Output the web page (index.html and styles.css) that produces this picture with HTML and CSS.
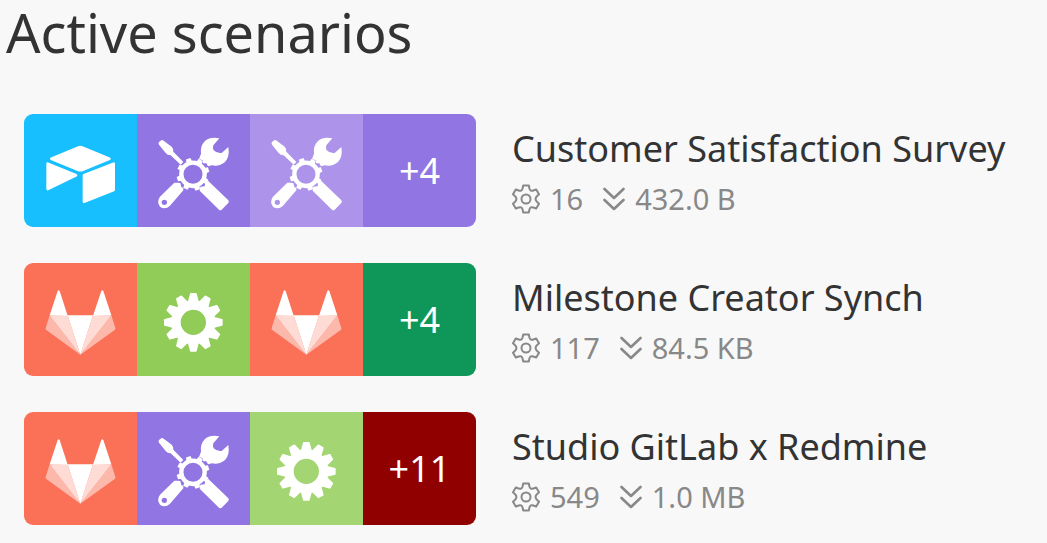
FILE: index.html
```html
<!DOCTYPE html>
<html lang="en">
<head>
<meta charset="utf-8">
<title>Active scenarios</title>
<link rel="stylesheet" href="styles.css">
</head>
<body>
<svg class="sprite" aria-hidden="true">
  <symbol id="airtable" viewBox="0 0 339 339">
    <g fill="#fff" stroke="#fff" stroke-width="8" stroke-linejoin="round">
      <path d="M82 134 L162 101 Q169 98 176 101 L256 134 L176 167 Q169 170 162 167 Z"/>
      <path d="M71 149 L156 184 L71 225 Z"/>
      <path d="M180 184 L269 149 V228 L180 263 Z"/>
    </g>
  </symbol>
  <symbol id="gitlab" viewBox="0 0 339 339">
    <path fill="#fff" d="M101 84 Q104 79 107 84 L131 158 L77 157 Z M232 84 Q235 79 238 84 L262 157 L207 158 Z M131 157 H207 L169 275 Z"/>
    <path fill="#fff" fill-opacity=".75" d="M77 157 H131 L169 275 Z M262 157 H207 L169 275 Z"/>
    <path fill="#fff" fill-opacity=".5" d="M77 157 L65 195 Q64 199 67 201 L169 275 Z M262 157 L274 195 Q275 199 272 201 L169 275 Z"/>
  </symbol>
  <symbol id="cog" viewBox="0 0 339 339">
    <circle cx="169" cy="178" r="52" fill="none" stroke="#fff" stroke-width="28"/>
    <g fill="#fff">
      <g id="cog-quarter">
        <path id="cog-tooth" d="M152 118 L159 92 Q159 90 161 90 H177 Q179 90 179 92 L186 118 Z"/>
        <use href="#cog-tooth" transform="rotate(30 169 178)"/>
        <use href="#cog-tooth" transform="rotate(60 169 178)"/>
      </g>
      <use href="#cog-quarter" transform="rotate(90 169 178)"/>
      <use href="#cog-quarter" transform="rotate(180 169 178)"/>
      <use href="#cog-quarter" transform="rotate(270 169 178)"/>
    </g>
  </symbol>
  <symbol id="tools" viewBox="0 0 339 339">
    <g fill="#fff">
      <path d="M66 84 L74 78 Q77 77 80 80 L104 98 Q109 103 109 113 L139 144 L131 152 L101 124 Q91 124 86 117 L66 92 Q63 87 66 84 Z"/>
      <path d="M247 73 Q220 67 204 81 Q189 96 192 119 L186 135 L197 139 L198 148 L208 148 L213 157 L225 154 Q248 158 264 144 Q279 128 274 99 L254 117 Q240 119 230 109 Q226 102 229 94 Z"/>
      <path fill-rule="evenodd" d="M120 206 L130 207 L133 219 L139 222 L139 229 L99 275 Q84 289 69 278 Q58 263 69 248 L112 206 Z M82 257 A8 8 0 1 0 82 273 A8 8 0 1 0 82 257 Z"/>
      <path d="M190 218 L203 217 L205 205 L214 201 L274 259 Q277 263 274 267 L254 287 Q250 290 246 287 L188 230 Z"/>
      <g id="ring-half">
        <path id="ring-tooth" d="M159 145 L161 132 H175 L177 145 Z" transform="rotate(28 168 181)"/>
        <use href="#ring-tooth" transform="rotate(45 168 181)"/>
        <use href="#ring-tooth" transform="rotate(90 168 181)"/>
        <use href="#ring-tooth" transform="rotate(135 168 181)"/>
      </g>
      <use href="#ring-half" transform="rotate(180 168 181)"/>
    </g>
    <circle cx="168" cy="181" r="35" fill="none" stroke="#fff" stroke-width="13"/>
  </symbol>
  <symbol id="gear" viewBox="0 0 28 30">
    <g fill="none" stroke="currentColor" stroke-width="2" stroke-linejoin="round">
      <path d="M11.2 1.5 H16.8 L17.5 4.7 Q18.4 7.5 21.3 6.5 L24.2 5.5 L27 10.3 L24.7 12.4 Q22.5 15 24.7 17.6 L27 19.7 L24.2 24.5 L21.3 23.5 Q18.4 22.5 17.5 25.3 L16.8 28.5 H11.2 L10.5 25.3 Q9.6 22.5 6.7 23.5 L3.8 24.5 L1 19.7 L3.3 17.6 Q5.5 15 3.3 12.4 L1 10.3 L3.8 5.5 L6.7 6.5 Q9.6 7.5 10.5 4.7 Z"/>
      <circle cx="14" cy="15" r="4.5"/>
    </g>
  </symbol>
  <symbol id="transfer" viewBox="0 0 22 24">
    <path fill="none" stroke="currentColor" stroke-width="2.6" stroke-linecap="round" stroke-linejoin="round" d="M1.500 2 L11 11 L20.500 2 M1.500 13 L11 22 L20.500 13"/>
  </symbol>
</svg>
<main class="page">
  <h1 class="title">Active scenarios</h1>
  <ul class="list">
    <li class="row">
      <div class="tiles">
        <span class="tile blue"><svg class="app"><use href="#airtable"/></svg></span>
        <span class="tile purple"><svg class="app"><use href="#tools"/></svg></span>
        <span class="tile lilac"><svg class="app"><use href="#tools"/></svg></span>
        <span class="tile purple">+4</span>
      </div>
      <div class="info">
        <h2 class="name">Customer Satisfaction Survey</h2>
        <div class="meta">
          <span class="stat"><svg class="gear"><use href="#gear"/></svg>16</span>
          <span class="stat"><svg class="transfer"><use href="#transfer"/></svg>432.0 B</span>
        </div>
      </div>
    </li>
    <li class="row">
      <div class="tiles">
        <span class="tile coral"><svg class="app"><use href="#gitlab"/></svg></span>
        <span class="tile green"><svg class="app"><use href="#cog"/></svg></span>
        <span class="tile coral"><svg class="app"><use href="#gitlab"/></svg></span>
        <span class="tile emerald">+4</span>
      </div>
      <div class="info">
        <h2 class="name">Milestone Creator Synch</h2>
        <div class="meta">
          <span class="stat"><svg class="gear"><use href="#gear"/></svg>117</span>
          <span class="stat"><svg class="transfer"><use href="#transfer"/></svg>84.5 KB</span>
        </div>
      </div>
    </li>
    <li class="row">
      <div class="tiles">
        <span class="tile coral"><svg class="app"><use href="#gitlab"/></svg></span>
        <span class="tile purple"><svg class="app"><use href="#tools"/></svg></span>
        <span class="tile lime"><svg class="app"><use href="#cog"/></svg></span>
        <span class="tile red">+11</span>
      </div>
      <div class="info">
        <h2 class="name">Studio GitLab x Redmine</h2>
        <div class="meta">
          <span class="stat"><svg class="gear"><use href="#gear"/></svg>549</span>
          <span class="stat"><svg class="transfer"><use href="#transfer"/></svg>1.0 MB</span>
        </div>
      </div>
    </li>
  </ul>
</main>
</body>
</html>
```
FILE: styles.css
```css
body {
  margin: 0;
  background: #f8f8f8;
  color: #333;
  font-family: "Noto Sans", "Open Sans", sans-serif;
}
.sprite {
  position: absolute;
  width: 0;
  height: 0;
}
.title {
  margin: 0;
  padding-left: 6px;
  font-size: 54px;
  font-weight: 400;
  line-height: 64px;
}
.list {
  display: flex;
  flex-direction: column;
  gap: 36px;
  margin: 0;
  padding: 50px 24px 16px;
  list-style: none;
}
.row {
  display: flex;
  gap: 36px;
}
.tiles {
  display: flex;
  flex: none;
  border-radius: 9px;
  overflow: hidden;
}
.tile {
  display: flex;
  align-items: center;
  justify-content: center;
  width: 113px;
  height: 113px;
  color: #fff;
  font-size: 36px;
}
.app {
  width: 100%;
  height: 100%;
}
.blue { background: #18bfff; }
.purple { background: #9175e3; }
.lilac { background: #ad94ea; }
.coral { background: #fb7158; }
.green { background: #92cc58; }
.emerald { background: #0f9759; }
.lime { background: #a3d672; }
.red { background: #910000; }
.info {
  min-width: 0;
  padding-top: 10px;
}
.name {
  margin: 0;
  font-size: 36px;
  font-weight: 400;
  line-height: 50px;
  white-space: nowrap;
}
.meta {
  display: flex;
  gap: 20px;
  color: #888;
  font-size: 29px;
  line-height: 50px;
}
.stat {
  display: flex;
  align-items: center;
  gap: 10px;
}
.gear {
  width: 28px;
  height: 30px;
}
.transfer {
  width: 22px;
  height: 24px;
}
```
